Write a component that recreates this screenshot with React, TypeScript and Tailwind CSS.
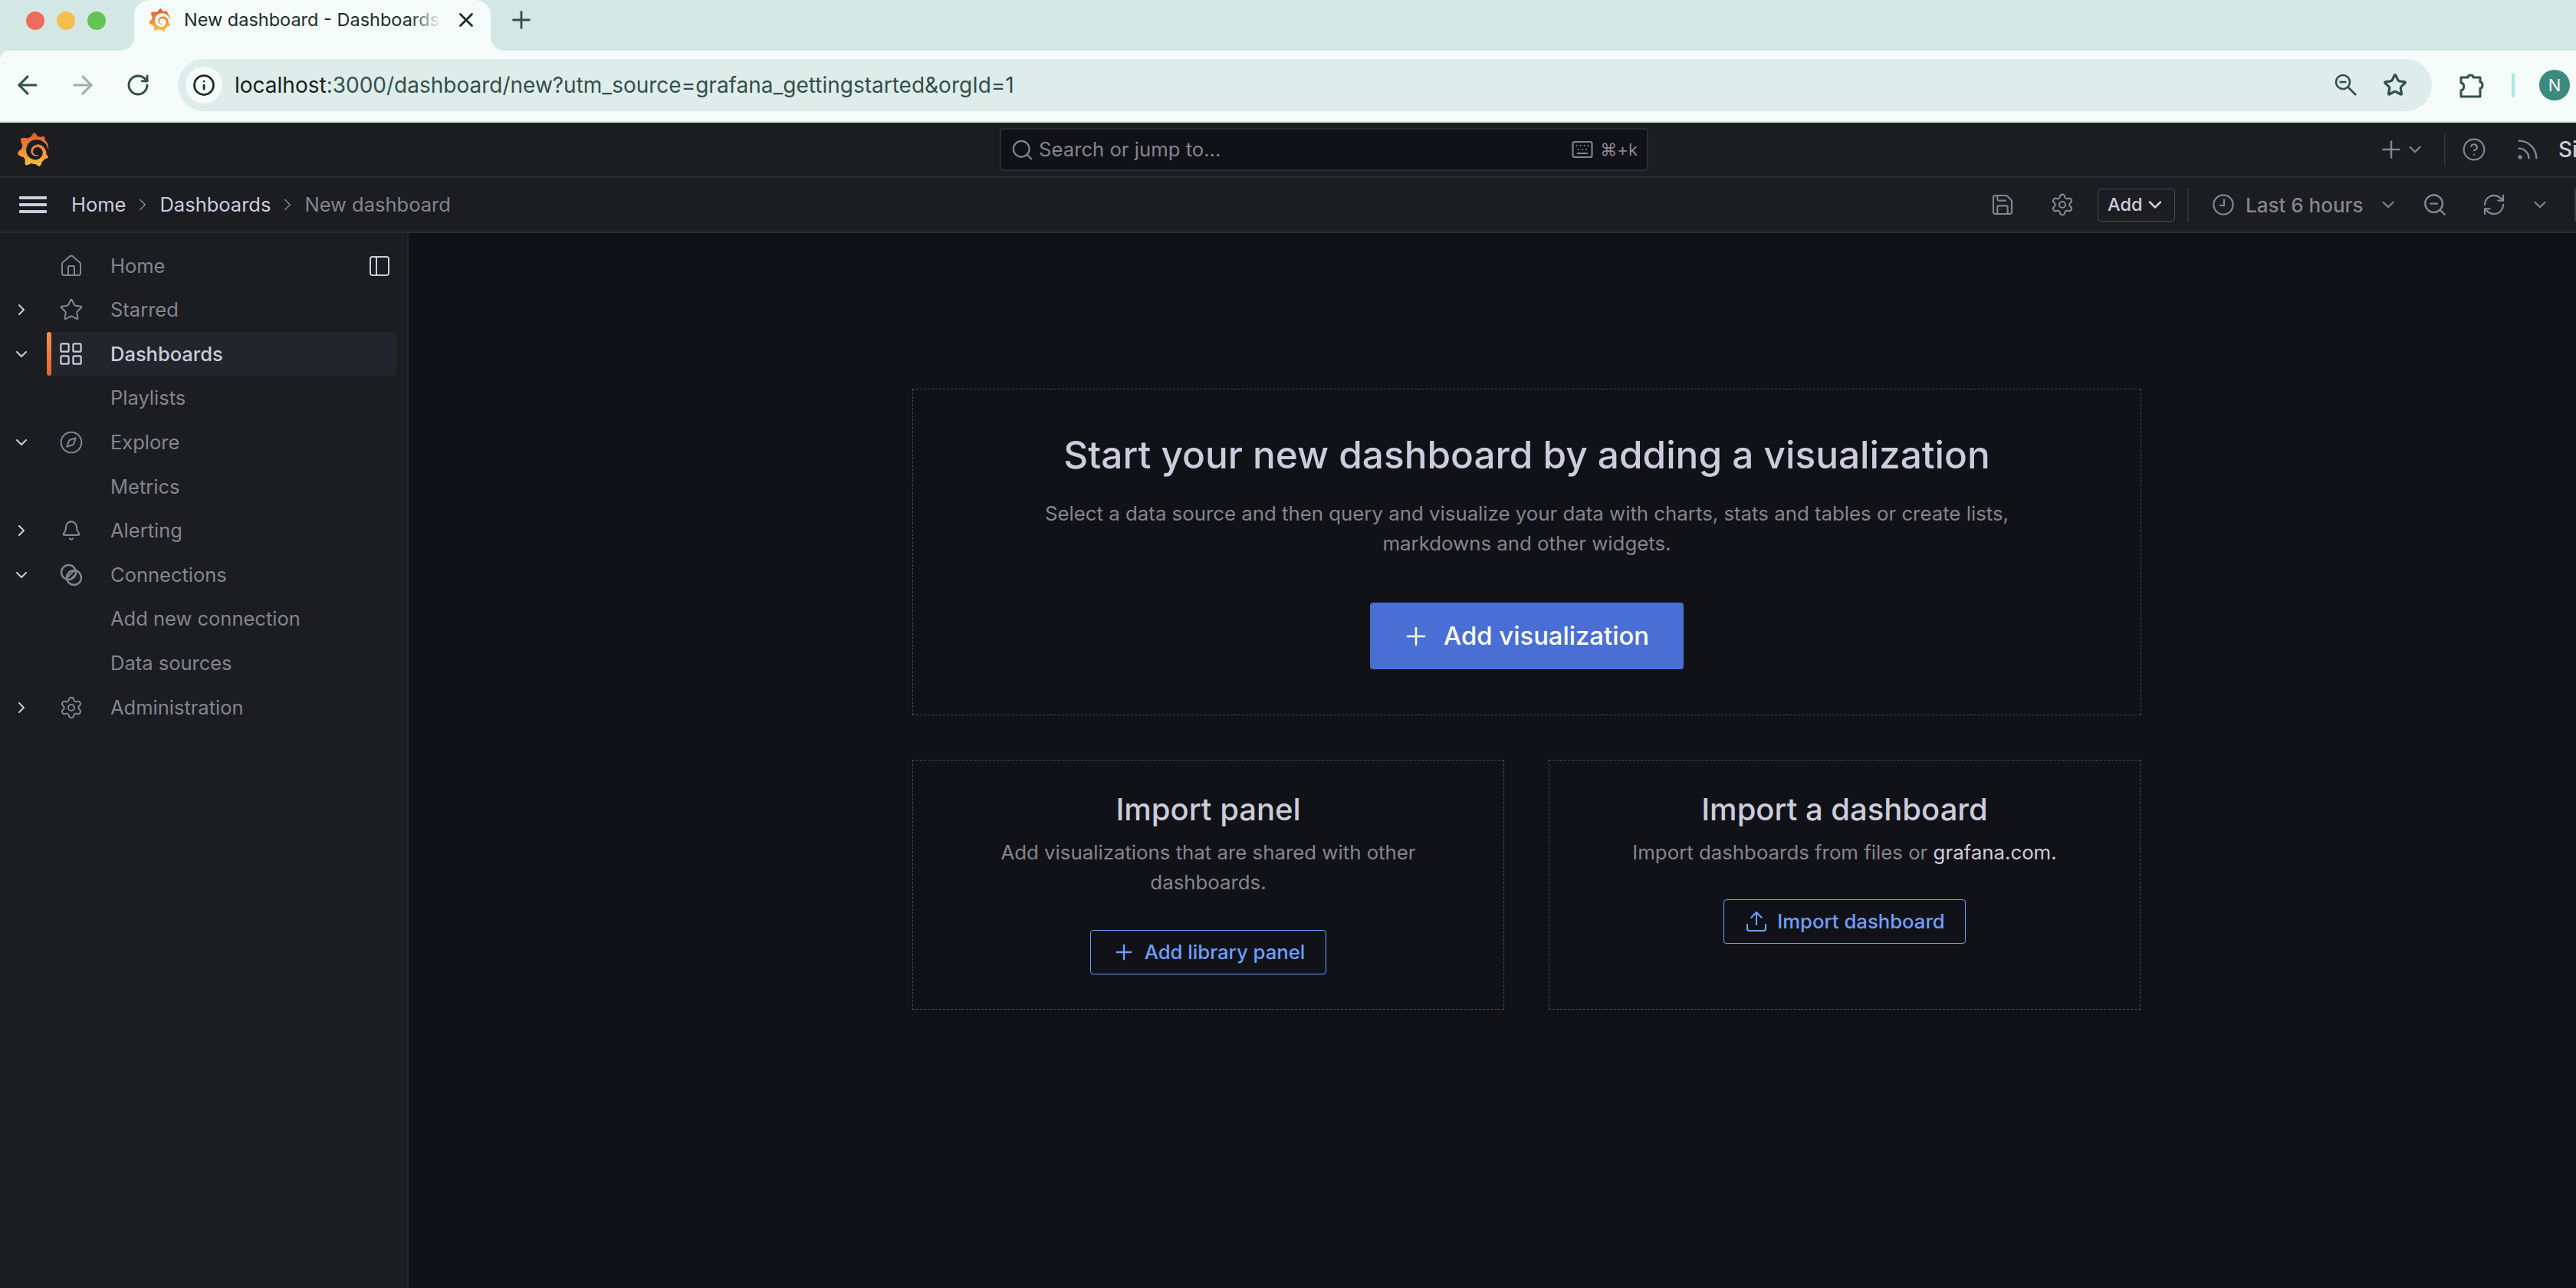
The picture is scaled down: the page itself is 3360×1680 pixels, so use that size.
import React from "react";
import { ArrowLeft, ArrowRight, RotateCw, Info, Star, Plus, X, Search, Keyboard, CircleHelp, Rss, Save, Settings, ChevronDown, ChevronRight, RefreshCw, ZoomOut, House, LayoutGrid, Compass, Bell, PanelLeft, Upload } from "lucide-react";
import { SiGrafana } from "react-icons/si";

const Connections = () => (
  <svg width="30" height="30" viewBox="0 0 30 30" fill="none" stroke="#85858f" strokeWidth="2.4">
    <circle cx="11.5" cy="11.5" r="9.5" />
    <circle cx="18.5" cy="18.5" r="9.5" />
    <path d="M9.5 18.5l9-9M13 21.5l8-8" strokeWidth="2" />
  </svg>
);

const Menu = () => (
  <svg width="36" height="22" viewBox="0 0 36 22" fill="#ccccdc">
    <rect x="0" y="0" width="36" height="4" rx="1" />
    <rect x="0" y="9" width="36" height="4" rx="1" />
    <rect x="0" y="18" width="36" height="4" rx="1" />
  </svg>
);

const Extension = () => (
  <svg width="34" height="34" viewBox="0 0 34 34" fill="none" stroke="#33504c" strokeWidth="3" strokeLinejoin="round" className="ml-[35px] shrink-0">
    <path d="M3 7H12C12 3 19 3 19 7H28V13C32 13 32 21 28 21V32H3V24C8 23 8 15 3 14Z" />
  </svg>
);

const ChromeZoom = () => (
  <svg width="32" height="32" viewBox="0 0 32 32" fill="none" stroke="#33504c" strokeWidth="2.6" className="ml-auto shrink-0">
    <circle cx="12" cy="12" r="9" />
    <path d="M7.5 12h9" />
    <path d="M18.5 18.5L29 29" />
  </svg>
);

const ClockIcon = () => (
  <svg width="28" height="28" viewBox="0 0 28 28" fill="none" stroke="#85858f" strokeWidth="2.2" className="ml-[31px] shrink-0">
    <circle cx="14" cy="14" r="12.6" />
    <path d="M15 6.5V15H9" />
  </svg>
);

type NavItem = { label: string; icon?: React.ReactNode; chev?: "r" | "d"; active?: boolean; dock?: boolean };

const iconCls = "text-[#85858f]";
const nav: NavItem[] = [
  { label: "Home", icon: <House size={32} strokeWidth={1.5} className={iconCls} />, dock: true },
  { label: "Starred", icon: <Star size={32} strokeWidth={1.5} className={iconCls} />, chev: "r" },
  { label: "Dashboards", icon: <LayoutGrid size={35} strokeWidth={1.5} className="text-[#ccccdc]" />, chev: "d", active: true },
  { label: "Playlists" },
  { label: "Explore", icon: <Compass size={32} strokeWidth={1.5} className={iconCls} />, chev: "d" },
  { label: "Metrics" },
  { label: "Alerting", icon: <Bell size={28} strokeWidth={1.8} className={iconCls} />, chev: "r" },
  { label: "Connections", icon: <Connections />, chev: "d" },
  { label: "Add new connection" },
  { label: "Data sources" },
  { label: "Administration", icon: <Settings size={32} strokeWidth={1.5} className={iconCls} />, chev: "r" },
];

function NavRow({ item }: { item: NavItem }) {
  return (
    <div className="flex h-[57.6px] items-center">
      <span className="flex w-[61px] justify-center pr-[5px] text-[#ccccdc]">
        {item.chev === "r" && <ChevronRight size={24} strokeWidth={2} />}
        {item.chev === "d" && <ChevronDown size={24} strokeWidth={2} />}
      </span>
      <div className={`relative mr-[14px] flex h-[57px] flex-1 items-center rounded-[4px] ${item.active ? "bg-[#22252b]" : ""}`}>
        {item.active && <span className="absolute bottom-0 left-0 top-0 w-[6px] rounded-[3px] bg-gradient-to-b from-[#f2914c] to-[#e8613a]" />}
        <span className="flex w-[83px] justify-center pr-[20px]">{item.icon}</span>
        <span className={`text-[25.5px] ${item.active ? "font-medium text-[#ccccdc]" : "text-[#85858f]"}`}>{item.label}</span>
        {item.dock && <PanelLeft size={32} strokeWidth={1.5} className="ml-auto mr-[6px] text-[#ccccdc]" />}
      </div>
    </div>
  );
}

function Card({ title, children, btnIcon, btnLabel, btnW, btnMt }: { title: string; children: React.ReactNode; btnIcon: React.ReactNode; btnLabel: string; btnW: string; btnMt: string }) {
  return (
    <div className="flex h-[326px] w-[772px] flex-col items-center border border-dashed border-[#4d4e54] pt-[40px]">
      <h3 className="text-[40px] font-medium leading-[48px] text-[#ccccdc]">{title}</h3>
      <div className="mt-[12px] w-[600px] text-center text-[25.8px] leading-[39px] text-[#85858f]">{children}</div>
      <button className={`flex h-[58px] items-center justify-center gap-[11px] rounded-[4px] border border-[#6e9fff] text-[25.7px] font-medium text-[#6e9fff] ${btnW} ${btnMt}`}>
        {btnIcon}
        {btnLabel}
      </button>
    </div>
  );
}

export default function App() {
  return (
    <div className="flex h-[1680px] w-[3360px] flex-col overflow-hidden bg-[#111217] font-['Inter',sans-serif]">
      <svg className="absolute h-0 w-0">
        <defs>
          <linearGradient id="gf" x1="0" y1="1" x2="0" y2="0">
            <stop offset="0" stopColor="#fbc43a" />
            <stop offset="0.5" stopColor="#f0883a" />
            <stop offset="1" stopColor="#e35a2e" />
          </linearGradient>
        </defs>
      </svg>

      {/* Browser chrome */}
      <div className="shrink-0 bg-[#d3e8e4]">
        <div className="flex h-[66px] items-end">
          <div className="flex h-[66px] w-[175px] items-center gap-[16px] pb-[12px] pl-[34px]">
            <span className="h-[24px] w-[24px] rounded-full bg-[#ee6a5f]" />
            <span className="h-[24px] w-[24px] rounded-full bg-[#f5bd4f]" />
            <span className="h-[24px] w-[24px] rounded-full bg-[#61c454]" />
          </div>
          <div className="relative flex h-[66px] w-[465px] items-center rounded-t-[20px] bg-[#f4fbf8] pb-[14px] pl-[18px]">
            <span className="absolute bottom-0 left-[-18px] h-[18px] w-[18px] bg-[radial-gradient(circle_at_0_0,transparent_18px,#f4fbf8_18px)]" />
            <span className="absolute bottom-0 right-[-18px] h-[18px] w-[18px] bg-[radial-gradient(circle_at_100%_0,transparent_18px,#f4fbf8_18px)]" />
            <SiGrafana size={30} fill="url(#gf)" className="shrink-0" />
            <div className="relative ml-[17px] w-[335px] shrink-0 overflow-hidden whitespace-nowrap text-[23.5px] text-[#1d2b29]">
              New dashboard - Dashboards
              <span className="absolute bottom-0 right-0 top-0 w-[40px] bg-gradient-to-r from-transparent to-[#f4fbf8]" />
            </div>
            <X size={30} strokeWidth={2.2} className="ml-[18px] shrink-0 text-[#1d2b29]" />
          </div>
          <div className="flex h-[66px] items-center pb-[14px] pl-[22px]">
            <Plus size={36} strokeWidth={1.9} className="text-[#33504c]" />
          </div>
        </div>

        <div className="flex h-[94px] items-center rounded-tl-[12px] border-b-[2px] border-[#dce9e6] bg-[#f4fbf8] pb-[2px]">
          <div className="flex w-[232px] items-center text-[#33504c]">
            <span className="flex w-[72px] justify-center"><ArrowLeft size={38} strokeWidth={1.9} /></span>
            <span className="flex w-[72px] justify-center"><ArrowRight size={38} strokeWidth={1.9} className="text-[#9fb0ac]" /></span>
            <span className="flex w-[72px] justify-center"><RotateCw size={32} strokeWidth={2.2} /></span>
          </div>
          <div className="flex h-[68px] w-[2940px] items-center rounded-full bg-[#dfedea] pl-[10px] pr-[32px]">
            <span className="flex h-[48px] w-[48px] items-center justify-center rounded-full bg-[#f4fbf8]">
              <Info size={30} strokeWidth={2.2} className="text-[#1d2b29]" />
            </span>
            <span className="ml-[16px] text-[28px] text-[#33504c]">
              <span className="text-[#142220]">localhost</span>:3000/dashboard/new?utm_source=grafana_gettingstarted&amp;orgId=1
            </span>
            <ChromeZoom />
            <Star size={32} strokeWidth={2.4} strokeLinejoin="miter" className="ml-[32px] shrink-0 text-[#33504c]" />
          </div>
          <Extension />
          <span className="ml-[35px] h-[32px] w-[4px] rounded-full bg-[#a7ebe0]" />
          <span className="ml-[32px] flex h-[40px] w-[40px] items-center justify-center rounded-full bg-[#3b8a7d] text-[22px] text-[#f4fbf8]">N</span>
        </div>
      </div>

      {/* Grafana top bar */}
      <div className="relative flex h-[72px] shrink-0 items-center border-b-[2px] border-[#2a2c31] bg-[#1b1d21]">
        <SiGrafana size={44} fill="url(#gf)" className="ml-[21px]" />
        <div className="ml-[1239px] flex h-[56px] w-[846px] items-center rounded-[4px] border-[2px] border-[#2a2c31] bg-[#111217] pl-[12px] pr-[12px] text-[#85858f]">
          <Search size={31} strokeWidth={1.7} />
          <span className="ml-[6px] text-[25.7px]">Search or jump to...</span>
          <Keyboard size={30} strokeWidth={1.7} className="ml-auto" />
          <span className="ml-[8px] text-[22px]">⌘+k</span>
        </div>
        <div className="absolute left-[3100px] top-0 flex h-[70px] w-[260px] items-center overflow-hidden text-[#85858f]">
          <Plus size={36} strokeWidth={1.7} className="ml-[1px] shrink-0" />
          <ChevronDown size={26} strokeWidth={2} className="shrink-0" />
          <span className="ml-[25px] h-[44px] w-[2px] shrink-0 bg-[#2f3136]" />
          <CircleHelp size={32} strokeWidth={1.6} className="ml-[21px] shrink-0" />
          <Rss size={34} strokeWidth={1.7} className="ml-[37px] shrink-0" />
          <span className="ml-[23px] shrink-0 whitespace-nowrap text-[28px] font-medium text-[#ccccdc]">Sign in</span>
        </div>
      </div>

      {/* Grafana second bar */}
      <div className="relative flex h-[72px] shrink-0 items-center border-b-[2px] border-[#2a2c31] bg-[#1b1d21]">
        <span className="ml-[25px] flex"><Menu /></span>
        <span className="ml-[32px] text-[25.5px] text-[#ccccdc]">Home</span>
        <ChevronRight size={26} strokeWidth={1.4} className="mx-[9px] text-[#85858f]" />
        <span className="text-[25.5px] text-[#ccccdc]">Dashboards</span>
        <ChevronRight size={26} strokeWidth={1.4} className="mx-[9px] text-[#85858f]" />
        <span className="text-[25.5px] text-[#85858f]">New dashboard</span>
        <div className="ml-auto flex items-center text-[#85858f]">
          <Save size={32} strokeWidth={1.6} />
          <Settings size={32} strokeWidth={1.6} className="ml-[46px]" />
          <button className="ml-[30px] flex h-[43px] w-[101px] items-center rounded-[4px] border-[1.5px] border-[#4a4c52] pl-[12px] text-[23.5px] font-medium text-[#ccccdc]">
            Add <ChevronDown size={28} strokeWidth={2.2} className="ml-[2px]" />
          </button>
          <span className="ml-[16px] h-[43px] w-[2px] bg-[#2f3136]" />
          <ClockIcon />
          <span className="ml-[15px] w-[153px] whitespace-nowrap text-[26px] font-medium">Last 6 hours</span>
          <ChevronDown size={26} strokeWidth={1.9} className="ml-[20px]" />
          <ZoomOut size={34} strokeWidth={1.7} className="ml-[31px]" />
          <RefreshCw size={32} strokeWidth={1.7} className="ml-[44px]" />
          <ChevronDown size={26} strokeWidth={1.9} className="ml-[31px]" />
          <span className="ml-[32px] h-[43px] w-[2px] bg-[#3a3c42]" />
        </div>
      </div>

      {/* Body */}
      <div className="flex min-h-0 flex-1">
        <aside className="w-[533px] shrink-0 border-r-[2px] border-[#25272c] bg-[#1b1d21] pt-[14px]">
          {nav.map((n) => (
            <NavRow key={n.label} item={n} />
          ))}
        </aside>
        <main className="flex-1 pl-[657px] pt-[203px]">
          <div className="flex h-[426px] w-[1603px] flex-col items-center border border-dashed border-[#4d4e54] pt-[55px]">
            <h1 className="text-[49.5px] font-medium leading-[60px] text-[#ccccdc]">Start your new dashboard by adding a visualization</h1>
            <p className="mt-[27px] w-[1300px] text-center text-[25.8px] leading-[39px] text-[#85858f]">
              Select a data source and then query and visualize your data with charts, stats and tables or create lists, markdowns and other widgets.
            </p>
            <button className="mt-[58px] flex h-[87px] w-[409px] items-center justify-center gap-[17px] rounded-[4px] bg-[#4a6fd4] pr-[4px] text-[32.8px] font-medium text-white">
              <Plus size={38} strokeWidth={1.6} />
              Add visualization
            </button>
          </div>
          <div className="mt-[58px] flex w-[1602px] justify-between">
            <Card title="Import panel" btnIcon={<Plus size={32} strokeWidth={1.7} />} btnLabel="Add library panel" btnW="w-[308px]" btnMt="mt-[43px]">
              Add visualizations that are shared with other dashboards.
            </Card>
            <Card title="Import a dashboard" btnIcon={<Upload size={32} strokeWidth={1.6} />} btnLabel="Import dashboard" btnW="w-[316px]" btnMt="mt-[42px]">
              Import dashboards from files or <span className="text-[#ccccdc]">grafana.com.</span>
            </Card>
          </div>
        </main>
      </div>
    </div>
  );
}
